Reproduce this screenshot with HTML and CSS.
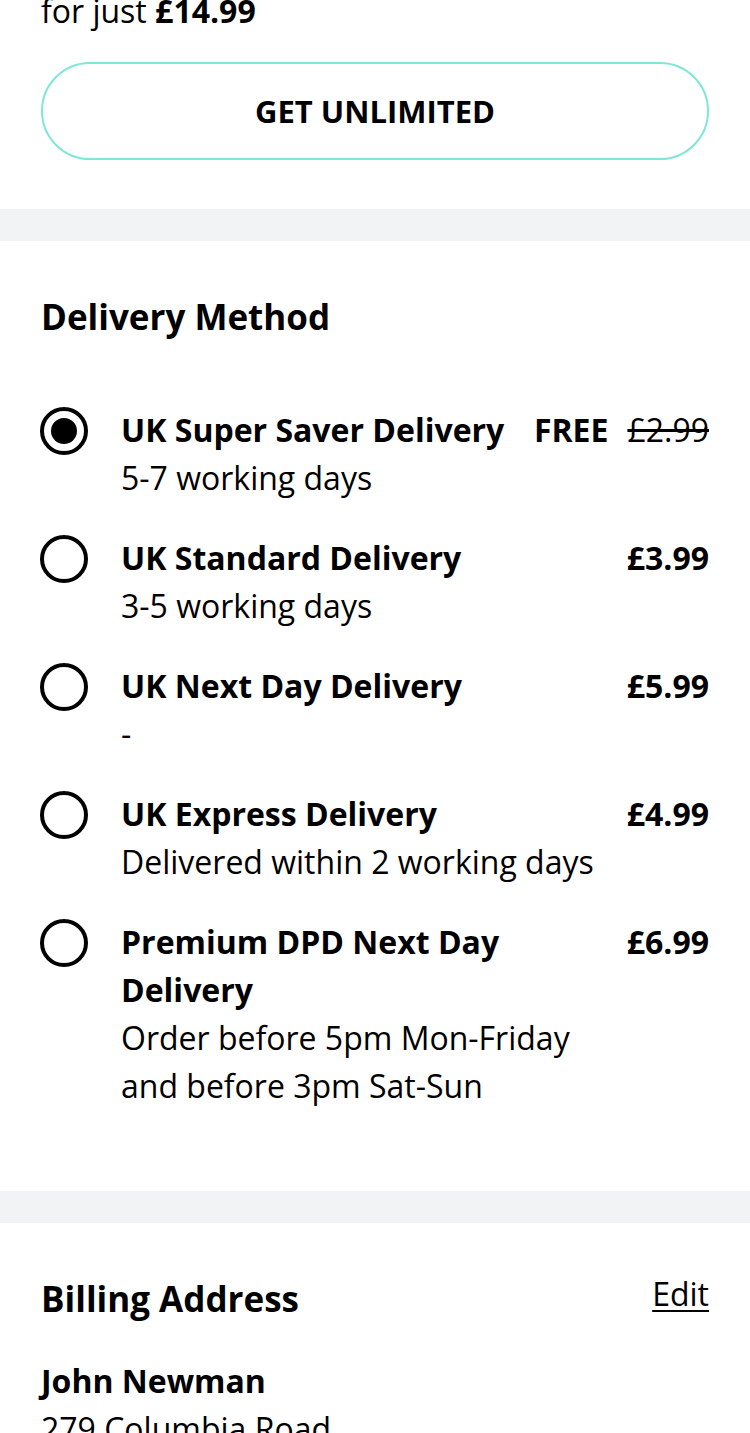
FILE: index.html
```html
<!DOCTYPE html>
<html>
<head>
<meta charset="utf-8">
<link rel="stylesheet" href="styles.css">
</head>
<body>
<section class="promo">
  <p class="promo-text">for just <strong>£14.99</strong></p>
  <button class="btn-outline">GET UNLIMITED</button>
</section>
<div class="band"></div>
<section class="panel delivery">
  <h2 class="panel-title">Delivery Method</h2>
  <ul class="options">
    <li class="option">
      <span class="radio checked"></span>
      <div class="option-body">
        <div class="option-main">
          <div class="option-name">UK Super Saver Delivery</div>
          <div class="option-desc">5-7 working days</div>
        </div>
        <div class="option-price"><span class="free">FREE</span><s class="was">£2.99</s></div>
      </div>
    </li>
    <li class="option">
      <span class="radio"></span>
      <div class="option-body">
        <div class="option-main">
          <div class="option-name">UK Standard Delivery</div>
          <div class="option-desc">3-5 working days</div>
        </div>
        <div class="option-price">£3.99</div>
      </div>
    </li>
    <li class="option">
      <span class="radio"></span>
      <div class="option-body">
        <div class="option-main">
          <div class="option-name">UK Next Day Delivery</div>
          <div class="option-desc">-</div>
        </div>
        <div class="option-price">£5.99</div>
      </div>
    </li>
    <li class="option">
      <span class="radio"></span>
      <div class="option-body">
        <div class="option-main">
          <div class="option-name">UK Express Delivery</div>
          <div class="option-desc">Delivered within 2 working days</div>
        </div>
        <div class="option-price">£4.99</div>
      </div>
    </li>
    <li class="option">
      <span class="radio"></span>
      <div class="option-body">
        <div class="option-main">
          <div class="option-name">Premium DPD Next Day Delivery</div>
          <div class="option-desc">Order before 5pm Mon-Friday<br>and before 3pm Sat-Sun</div>
        </div>
        <div class="option-price">£6.99</div>
      </div>
    </li>
  </ul>
</section>
<div class="band"></div>
<section class="panel billing">
  <div class="panel-head">
    <h2 class="panel-title">Billing Address</h2>
    <a class="edit-link" href="#">Edit</a>
  </div>
  <div class="address">
    <div class="addr-name">John Newman</div>
    <div class="addr-line">279 Columbia Road</div>
  </div>
</section>
</body>
</html>
```

FILE: styles.css
```css
* { box-sizing: border-box; }
html, body {
  margin: 0;
  padding: 0;
  background: #fff;
}
body {
  width: 750px;
  overflow: hidden;
  font-family: "Open Sans", "Noto Sans", sans-serif;
  color: #000;
  font-size: 32px;
  line-height: 48px;
}
.promo {
  padding: 0 41px 49px;
}
.promo-text {
  margin: -13px 0 0;
  line-height: 48px;
}
.promo-text strong { font-weight: 700; }
.btn-outline {
  display: block;
  width: 100%;
  height: 98px;
  margin-top: 27px;
  border: 2px solid #7fe6da;
  border-radius: 49px;
  background: #fff;
  font-family: inherit;
  font-size: 31px;
  font-weight: 700;
  color: #000;
}
.band {
  height: 32px;
  background: #f2f3f5;
}
.panel {
  padding: 52px 41px 0 40px;
}
.delivery { padding-bottom: 81px; }
.panel-title {
  margin: 0;
  font-size: 35px;
  line-height: 48px;
  font-weight: 700;
  padding-left: 1px;
}
.options {
  list-style: none;
  margin: 65px 0 0;
  padding: 0;
  display: flex;
  flex-direction: column;
  gap: 32px;
}
.option {
  display: flex;
  align-items: flex-start;
  gap: 33px;
}
.radio {
  flex: none;
  width: 48px;
  height: 48px;
  border: 4px solid #000;
  border-radius: 50%;
  display: flex;
  align-items: center;
  justify-content: center;
  margin-top: 1px;
}
.radio.checked::after {
  content: "";
  width: 26px;
  height: 26px;
  border-radius: 50%;
  background: #000;
}
.option-body {
  flex: 1;
  display: flex;
  gap: 24px;
  align-items: flex-start;
}
.option-main { flex: 1; }
.option-name { font-weight: 700; }
.option-price {
  flex: none;
  font-weight: 700;
  display: flex;
  gap: 19px;
}
.was {
  font-weight: 400;
}
.panel-head {
  display: flex;
  justify-content: space-between;
  align-items: flex-start;
}
.edit-link {
  color: #000;
  text-decoration: underline;
  text-underline-offset: 4px;
  text-decoration-thickness: 2px;
  line-height: 38px;
}
.address { margin-top: 34px; padding-left: 1px; }
.addr-name { font-weight: 700; }
```
